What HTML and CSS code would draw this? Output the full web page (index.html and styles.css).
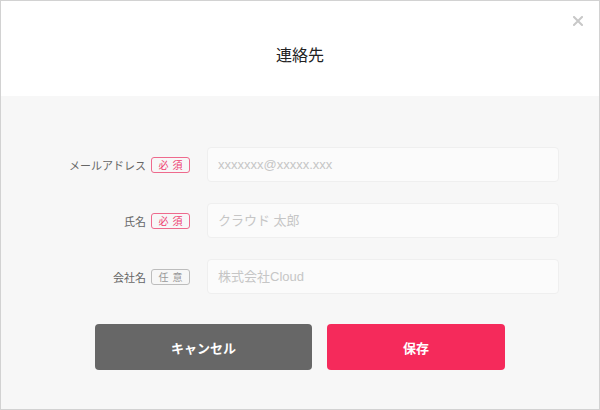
FILE: index.html
```html
<!DOCTYPE html>
<html lang="ja">
<head>
    <meta charset="UTF-8">
    <meta name="viewport" content="width=device-width, initial-scale=1.0">
    <title>連絡先</title>
    <link rel="stylesheet" href="styles.css">
</head>
<body>

    <div class="modal">
        <div class="modal-header">
            <h2>連絡先</h2>
            <button class="close" type="button" aria-label="閉じる">
                <svg width="10" height="10" viewBox="0 0 10 10">
                    <path d="M1 1 L9 9 M9 1 L1 9" stroke="#c8c8c8" stroke-width="2" stroke-linecap="square"/>
                </svg>
            </button>
        </div>

        <form class="modal-body">
            <div class="field">
                <div class="field-head">
                    <label for="email">メールアドレス</label>
                    <span class="badge required">必須</span>
                </div>
                <input type="text" id="email" placeholder="xxxxxxx@xxxxx.xxx">
            </div>

            <div class="field">
                <div class="field-head">
                    <label for="name">氏名</label>
                    <span class="badge required">必須</span>
                </div>
                <input type="text" id="name" placeholder="クラウド 太郎">
            </div>

            <div class="field">
                <div class="field-head">
                    <label for="company">会社名</label>
                    <span class="badge optional">任意</span>
                </div>
                <input type="text" id="company" placeholder="株式会社Cloud">
            </div>

            <div class="actions">
                <button type="button" class="btn btn-cancel">キャンセル</button>
                <button type="button" class="btn btn-save">保存</button>
            </div>
        </form>
    </div>

</body>
</html>
```

FILE: styles.css
```css
body {
    margin: 0;
    padding: 0;
    font-family: "Noto Sans CJK JP", "Liberation Sans", sans-serif;
}

.modal {
    box-sizing: border-box;
    width: 600px;
    height: 410px;
    border: 1px solid #d2d2d2;
    background-color: #f7f7f7;
    display: flex;
    flex-direction: column;
}

.modal-header {
    position: relative;
    height: 95px;
    background-color: #fff;
    display: flex;
    justify-content: center;
    align-items: center;
}

.modal-header h2 {
    margin: 10px 0 0;
    font-size: 16px;
    font-weight: normal;
    color: #222;
}

.close {
    position: absolute;
    top: 15px;
    right: 16px;
    padding: 0;
    border: none;
    background: none;
    line-height: 0;
    cursor: pointer;
}

.modal-body {
    margin: 0;
    padding-top: 51px;
    display: flex;
    flex-direction: column;
    gap: 21px;
}

.field {
    display: flex;
    align-items: center;
}

.field-head {
    width: 189px;
    display: flex;
    justify-content: flex-end;
    align-items: center;
    gap: 5px;
}

.field-head label {
    font-size: 11px;
    color: #666;
}

.badge {
    box-sizing: border-box;
    width: 39px;
    height: 16px;
    padding-left: 4px;
    border: 1px solid;
    border-radius: 3px;
    font-size: 10px;
    line-height: 14px;
    letter-spacing: 4px;
    text-align: center;
}

.badge.required {
    border-color: #ee6a8d;
    color: #ee3d70;
}

.badge.optional {
    border-color: #bdbdbd;
    color: #999;
}

.field input {
    box-sizing: border-box;
    width: 352px;
    height: 35px;
    margin-left: 17px;
    padding: 0 10px;
    border: 1px solid #efefef;
    border-radius: 4px;
    background-color: #fbfbfb;
    font-family: "Liberation Sans", "Noto Sans CJK JP", sans-serif;
    font-size: 13px;
    color: #333;
    outline: none;
}

.field input::placeholder {
    color: #c6c6c6;
}

.actions {
    padding-left: 94px;
    margin-top: 9px;
    display: flex;
    gap: 15px;
}

.btn {
    height: 46px;
    border: none;
    border-radius: 4px;
    color: #fff;
    font-family: "Noto Sans CJK JP", sans-serif;
    font-size: 13px;
    font-weight: bold;
    cursor: pointer;
}

.btn-cancel {
    width: 217px;
    background-color: #676767;
}

.btn-save {
    width: 178px;
    background-color: #f52a5b;
}
```
